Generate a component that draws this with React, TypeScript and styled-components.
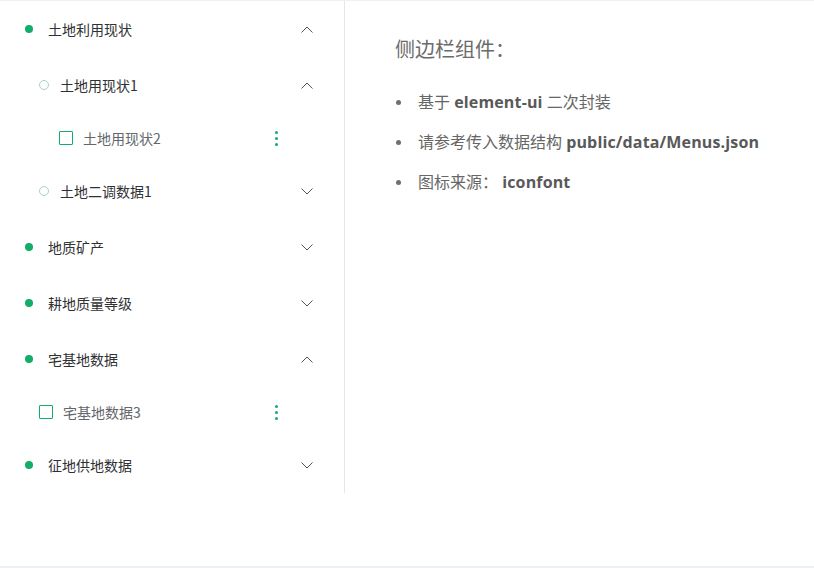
import React from "react";
import styled, { createGlobalStyle } from "styled-components";

const Global = createGlobalStyle`
  html, body { margin: 0; padding: 0; background: #fff; }
  body { font-family: "Open Sans", "Noto Sans CJK SC", sans-serif; }
`;

const GREEN = "#12ad69";

const Page = styled.div`
  box-sizing: border-box;
  height: 568px;
  border-top: 1px solid #eef0f3;
  border-bottom: 2px solid #eef0f3;
  display: flex;
  align-items: flex-start;
`;

const Sidebar = styled.nav`
  width: 344px;
  border-right: 1px solid #e6e6e6;
  display: flex;
  flex-direction: column;
`;

const Row = styled.div<{ $h: number; $pad: number }>`
  height: ${(p) => p.$h}px;
  display: flex;
  align-items: center;
  padding-left: ${(p) => p.$pad}px;
  padding-right: 31px;
  font-family: "Noto Sans CJK SC", sans-serif;
  font-size: 14px;
`;

const Label = styled.span<{ $leaf?: boolean }>`
  flex: 1;
  color: ${(p) => (p.$leaf ? "#63666b" : "#303133")};
`;

const Dot = styled.span`
  width: 8px;
  height: 8px;
  border-radius: 50%;
  background: ${GREEN};
  margin-right: 15px;
  flex: none;
`;

const Ring = styled.span`
  box-sizing: border-box;
  width: 10px;
  height: 10px;
  border-radius: 50%;
  border: 1px solid #a9d3c2;
  margin-right: 11px;
  flex: none;
`;

const Box = styled.span`
  box-sizing: border-box;
  width: 14px;
  height: 14px;
  border: 1.5px solid ${GREEN};
  border-radius: 1px;
  margin-right: 10px;
  flex: none;
`;

const Kebab = styled.span`
  display: flex;
  flex-direction: column;
  gap: 3px;
  margin-right: 35px;
  span {
    width: 3px;
    height: 3px;
    border-radius: 50%;
    background: #14a883;
  }
`;

const Chevron = ({ up }: { up?: boolean }) => (
  <svg width="12" height="7" viewBox="0 0 12 7" style={{ flex: "none" }}>
    <path
      d={up ? "M0.5 6.5 L6 1 L11.5 6.5" : "M0.5 0.5 L6 6 L11.5 0.5"}
      fill="none"
      stroke="#4d5160"
      strokeWidth="1"
    />
  </svg>
);

const Main = styled.main`
  flex: 1;
  padding: 34px 0 0 50px;
  color: #666;
`;

const Title = styled.h2`
  margin: 0 0 27px;
  font-family: "Noto Sans CJK SC", sans-serif;
  font-weight: 400;
  font-size: 20px;
  line-height: 28px;
  color: #6b6b6b;
`;

const List = styled.ul`
  margin: 0;
  padding: 0;
  list-style: none;
  font-family: "Open Sans", "Noto Sans CJK SC", sans-serif;
  font-size: 16px;
  color: #666;
`;

const Bullet = styled.li`
  display: flex;
  align-items: center;
  line-height: 24px;
  margin-bottom: 16px;
  &::before {
    content: "";
    width: 5px;
    height: 5px;
    border-radius: 50%;
    background: #707070;
    margin: 0 17px 0 1px;
    flex: none;
  }
  b {
    font-weight: 700;
    color: #595959;
    letter-spacing: 0.15px;
  }
`;

type Item =
  | { kind: "sub"; label: string; level: 1 | 2; open: boolean }
  | { kind: "leaf"; label: string; pad: number };

const items: Item[] = [
  { kind: "sub", label: "土地利用现状", level: 1, open: true },
  { kind: "sub", label: "土地用现状1", level: 2, open: true },
  { kind: "leaf", label: "土地用现状2", pad: 59 },
  { kind: "sub", label: "土地二调数据1", level: 2, open: false },
  { kind: "sub", label: "地质矿产", level: 1, open: false },
  { kind: "sub", label: "耕地质量等级", level: 1, open: false },
  { kind: "sub", label: "宅基地数据", level: 1, open: true },
  { kind: "leaf", label: "宅基地数据3", pad: 39 },
  { kind: "sub", label: "征地供地数据", level: 1, open: false },
];

export default function App() {
  return (
    <>
      <Global />
      <Page>
        <Sidebar>
          {items.map((it, i) =>
            it.kind === "sub" ? (
              <Row key={i} $h={56} $pad={it.level === 1 ? 25 : 39}>
                {it.level === 1 ? <Dot /> : <Ring />}
                <Label>{it.label}</Label>
                <Chevron up={it.open} />
              </Row>
            ) : (
              <Row key={i} $h={50} $pad={it.pad}>
                <Box />
                <Label $leaf>{it.label}</Label>
                <Kebab>
                  <span />
                  <span />
                  <span />
                </Kebab>
              </Row>
            )
          )}
        </Sidebar>
        <Main>
          <Title>侧边栏组件：</Title>
          <List>
            <Bullet>
              <span>
                基于 <b>element-ui</b> 二次封装
              </span>
            </Bullet>
            <Bullet>
              <span>
                请参考传入数据结构 <b>public/data/Menus.json</b>
              </span>
            </Bullet>
            <Bullet>
              <span>
                图标来源： <b>iconfont</b>
              </span>
            </Bullet>
          </List>
        </Main>
      </Page>
    </>
  );
}
